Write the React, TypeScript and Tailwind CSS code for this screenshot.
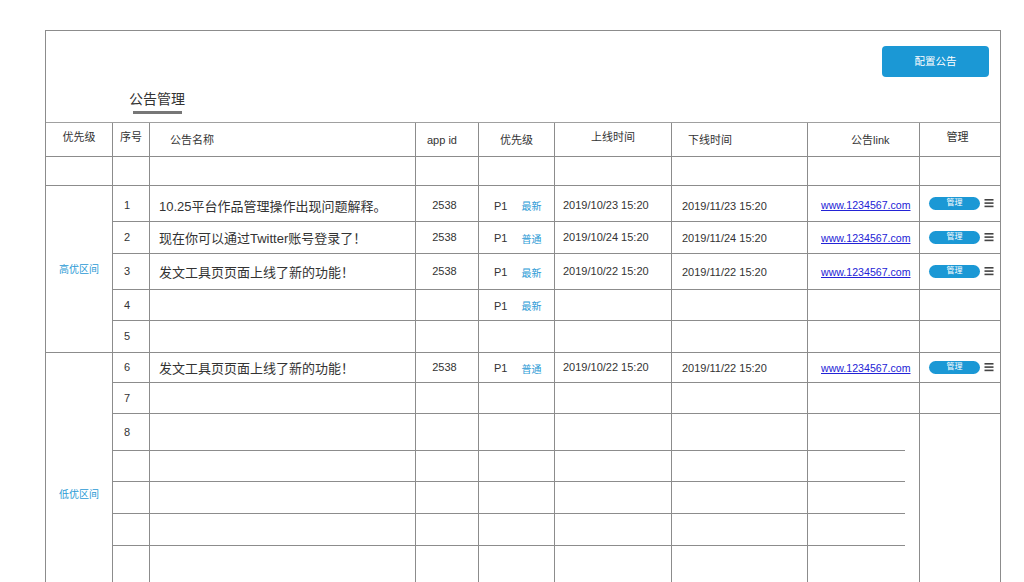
import React from "react";

type Row = {
  seq?: string;
  name?: string;
  appId?: string;
  p?: string;
  tag?: string;
  on?: string;
  off?: string;
  link?: boolean;
};

const rows: Row[] = [
  {},
  { seq: "1", name: "10.25平台作品管理操作出现问题解释。", appId: "2538", p: "P1", tag: "最新", on: "2019/10/23 15:20", off: "2019/11/23 15:20", link: true },
  { seq: "2", name: "现在你可以通过Twitter账号登录了！", appId: "2538", p: "P1", tag: "普通", on: "2019/10/24 15:20", off: "2019/11/24 15:20", link: true },
  { seq: "3", name: "发文工具页页面上线了新的功能！", appId: "2538", p: "P1", tag: "最新", on: "2019/10/22 15:20", off: "2019/11/22 15:20", link: true },
  { seq: "4", p: "P1", tag: "最新" },
  { seq: "5" },
  { seq: "6", name: "发文工具页页面上线了新的功能！", appId: "2538", p: "P1", tag: "普通", on: "2019/10/22 15:20", off: "2019/11/22 15:20", link: true },
  { seq: "7" },
  { seq: "8" },
  {},
  {},
  {},
  {},
];

const line = "border-[#8c8c8c]";
const cell = `border-r border-b ${line} flex items-center`;

const Hamburger = () => (
  <svg width="10" height="10" viewBox="0 0 10 10" className="shrink-0">
    <rect x="0.5" y="1" width="9" height="1.6" fill="#444" />
    <rect x="0.5" y="4.3" width="9" height="1.6" fill="#444" />
    <rect x="0.5" y="7.6" width="9" height="1.6" fill="#444" />
  </svg>
);

const ShortLine = () => (
  <div className="flex h-full w-full flex-col justify-end border-r border-[#8c8c8c]">
    <div className="h-px w-[97px] bg-[#8c8c8c]" />
  </div>
);

export default function App() {
  return (
    <div
      className="h-[582px] w-[1024px] overflow-hidden bg-white text-[#333]"
      style={{ fontFamily: '"Liberation Sans", Arial, "Noto Sans CJK SC", sans-serif' }}
    >
      <div className="ml-[45px] mt-[30px] w-[956px] border border-[#8c8c8c]">
        {/* header area */}
        <div className="flex h-[92px] flex-col border-b border-[#a0a0a0]">
          <div className="flex justify-end pr-[11px] pt-[15px]">
            <button className="flex h-[31px] w-[107px] items-center justify-center rounded-[4px] bg-[#1b98d5] text-[10.5px] text-white">
              配置公告
            </button>
          </div>
          <div className="ml-[83px] mt-[13px] flex flex-col">
            <span className="text-[14px] leading-[18px] text-[#333]">公告管理</span>
            <div className="ml-[4px] mt-[3px] h-[3px] w-[49px] bg-[#777]" />
          </div>
        </div>

        {/* table */}
        <div className="grid grid-cols-[67px_37px_266px_63px_76px_117px_136px_112px_80px] grid-rows-[34px_29px_36px_32px_36px_31px_32px_30px_31px_37px_31px_32px_32px_89px] text-[11px]">
          {/* header row */}
          <div className={`${cell} justify-center pb-[4px]`}>优先级</div>
          <div className={`${cell} justify-center pb-[4px]`}>序号</div>
          <div className={`${cell} pl-[20px] pt-[2px]`}>公告名称</div>
          <div className={`${cell} pl-[11px] pt-[2px]`}>app id</div>
          <div className={`${cell} justify-center pt-[2px]`}>优先级</div>
          <div className={`${cell} justify-center pb-[4px]`}>上线时间</div>
          <div className={`${cell} pl-[16px] pt-[2px]`}>下线时间</div>
          <div className={`${cell} pl-[43px] pt-[2px]`}>公告link</div>
          <div className={`border-b ${line} flex items-center justify-center pb-[5px] pr-[5px]`}>管理</div>

          {rows.map((r, i) => {
            const gridRow = i + 2;
            const shortBottom = gridRow >= 10;
            const b = gridRow === 14 ? `border-r ${line} flex items-center` : cell;
            const first = gridRow === 3;
            return (
              <React.Fragment key={i}>
                {gridRow === 2 && <div className={cell} />}
                {gridRow === 3 && (
                  <div className={`${cell} row-span-5 justify-center text-[10px] text-[#2a9ad5]`}>高优区间</div>
                )}
                {gridRow === 8 && (
                  <div className={`border-r ${line} row-span-7 flex items-start justify-center pt-[134px] text-[10px] text-[#2a9ad5]`}>
                    低优区间
                  </div>
                )}
                <div className={`${b} pl-[11px] ${first ? "pt-[3px]" : ""}`}>{r.seq}</div>
                <div className={`${b} pl-[9px] text-[13px] ${first ? "pt-[6px]" : "pt-[3px]"}`}>{r.name}</div>
                <div className={`${b} justify-center pr-[5px] ${first ? "pt-[3px]" : ""}`}>{r.appId}</div>
                <div className={`${b} pl-[15px] ${first ? "pt-[5px]" : "pt-[2px]"}`}>
                  {r.p && <span className="text-[11px]">{r.p}</span>}
                  {r.tag && <span className="ml-[14px] pt-[1px] text-[10px] text-[#2a9ad5]">{r.tag}</span>}
                </div>
                <div className={`${b} pl-[8px] ${first ? "pt-[3px]" : ""}`}>{r.on}</div>
                <div className={`${b} pl-[10px] ${first ? "pt-[5px]" : "pt-[2px]"}`}>{r.off}</div>
                {shortBottom ? (
                  <ShortLine />
                ) : (
                  <div className={`${cell} pl-[13px] ${first ? "pt-[5px]" : "pt-[2px]"}`}>
                    {r.link && <span className="text-[10.6px] text-[#2323d6] underline">www.1234567.com</span>}
                  </div>
                )}
                {gridRow < 10 && (
                  <div className={`border-b ${line} flex items-center pl-[9px] pb-[1px]`}>
                    {r.link && (
                      <>
                        <span className="flex h-[13px] w-[51px] items-center justify-center rounded-full bg-[#1b98d5] text-[8px] text-white">
                          管理
                        </span>
                        <span className="ml-[4px]">
                          <Hamburger />
                        </span>
                      </>
                    )}
                  </div>
                )}
                {gridRow === 10 && <div className="row-span-5" />}
              </React.Fragment>
            );
          })}
        </div>
      </div>
    </div>
  );
}
